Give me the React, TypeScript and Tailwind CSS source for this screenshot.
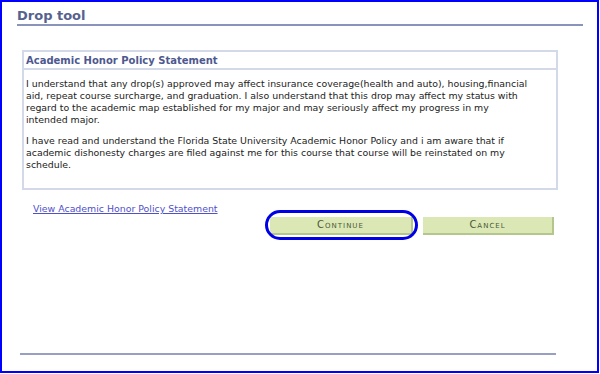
export default function App() {
  return (
    <div className="box-border h-[373px] w-[599px] border-2 border-[#0000ff] bg-white font-['DejaVu_Sans',sans-serif]">
      {/* Page title */}
      <div className="ml-[15px] mr-[14px] border-b-2 border-[#8a94bb] pt-[5px]">
        <h1 className="h-[17px] text-[13px] font-bold leading-[17px] text-[#55628f]">Drop tool</h1>
      </div>

      {/* Policy box */}
      <div className="ml-[20px] mt-[24px] w-[536px] border-2 border-[#d3d9e8]">
        <div className="h-[18px] border-b-2 border-[#d3d9e8] pl-[2px] text-[10px] font-bold leading-[18px] text-[#4d5990]">
          Academic Honor Policy Statement
        </div>
        <div className="whitespace-nowrap pb-[17px] pl-[2px] pt-[8px] text-[9.4px] leading-[12px] text-[#222]">
          <p>
            I understand that any drop(s) approved may affect insurance coverage(health and auto), housing,financial
            <br />
            aid, repeat course surcharge, and graduation. I also understand that this drop may affect my status with
            <br />
            regard to the academic map established for my major and may seriously affect my progress in my
            <br />
            intended major.
          </p>
          <p className="mt-[9px]">
            I have read and understand the Florida State University Academic Honor Policy and i am aware that if
            <br />
            academic dishonesty charges are filed against me for this course that course will be reinstated on my
            <br />
            schedule.
          </p>
        </div>
      </div>

      {/* Link and buttons */}
      <div className="mt-[13px] flex items-start">
        <a href="#" className="ml-[31px] block text-[9.4px] leading-[12px] text-[#5050c8] underline">
          View Academic Honor Policy Statement
        </a>
        <div className="ml-auto mr-[43px] mt-[14px] flex items-start gap-[10px]">
          <div className="relative h-[18px]">
            <button
              type="button"
              className="block h-[18px] w-[143px] border-b-2 border-r-2 border-[#b3c78c] bg-[#dbe8b5] text-[10px] leading-[16px] tracking-[1px] text-[#4a5838] [font-variant:small-caps]"
            >
              Continue
            </button>
            <div className="pointer-events-none absolute -bottom-[5px] -left-[5px] -right-[5px] -top-[7px] rounded-full border-[3px] border-[#0000e6]" />
          </div>
          <button
            type="button"
            className="block h-[18px] w-[131px] border-b-2 border-r-2 border-[#b3c78c] bg-[#dbe8b5] text-[10px] leading-[16px] tracking-[1px] text-[#4a5838] [font-variant:small-caps]"
          >
            Cancel
          </button>
        </div>
      </div>

      {/* Bottom rule */}
      <div className="ml-[18px] mt-[118px] w-[536px] border-t-2 border-[#97a0c0]" />
    </div>
  );
}
